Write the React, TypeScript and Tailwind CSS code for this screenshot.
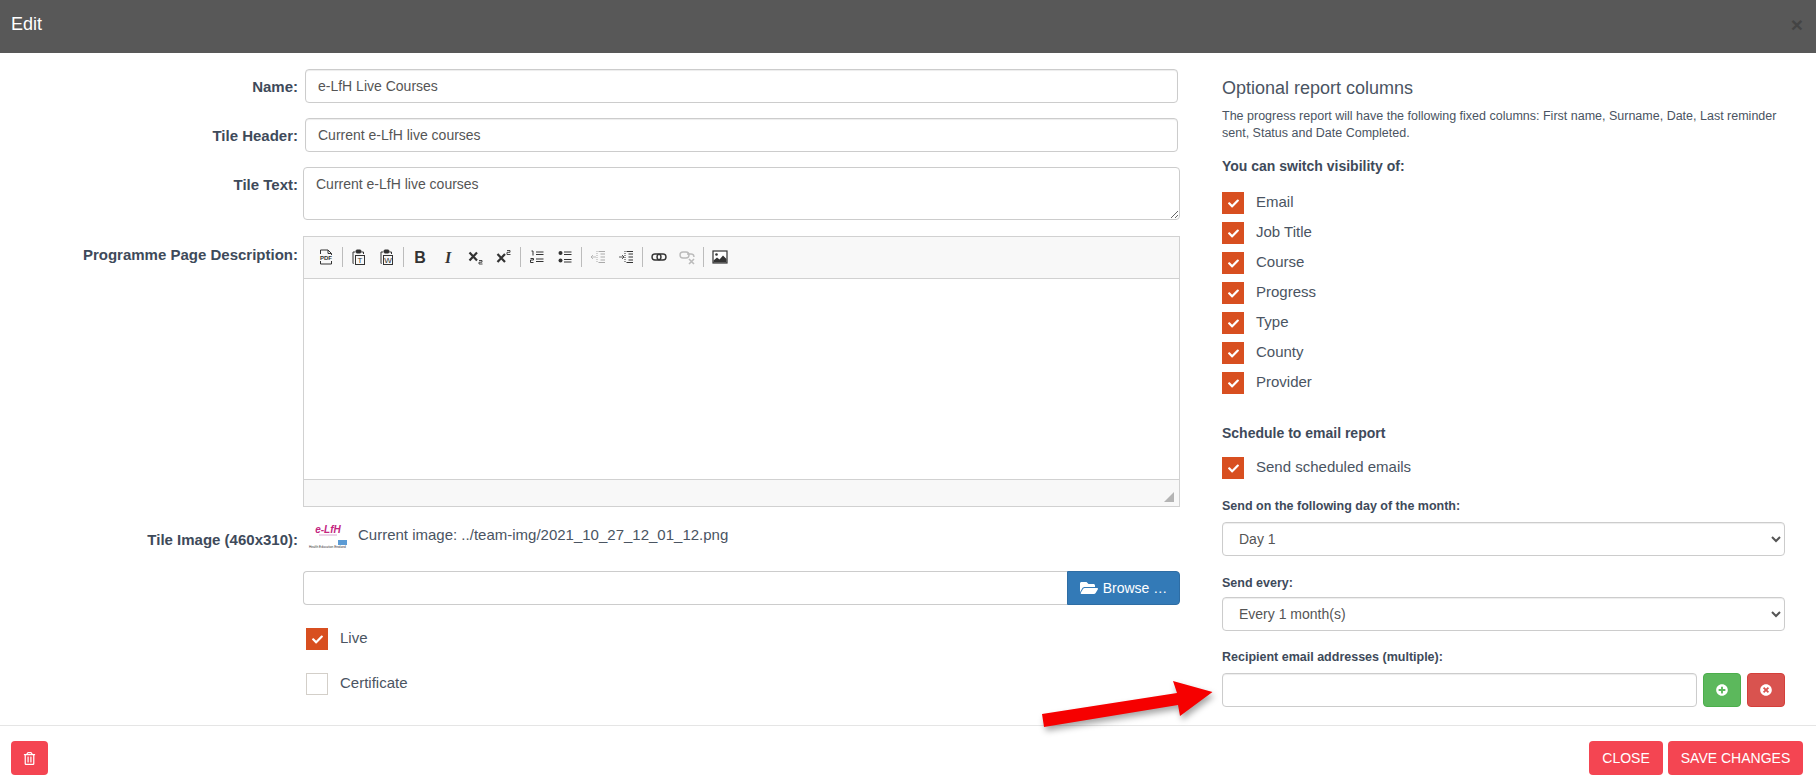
import { FaCheck, FaFolderOpen, FaPlusCircle, FaRegTrashAlt, FaTimesCircle } from 'react-icons/fa';
import type { ReactNode } from 'react';

const reportColumns = ['Email', 'Job Title', 'Course', 'Progress', 'Type', 'County', 'Provider'];

function Icon({ children }: { children: ReactNode }) {
  return (
    <svg width="16" height="16" viewBox="0 0 16 16" fill="none" stroke="#333" strokeWidth="1">
      {children}
    </svg>
  );
}

function Paste({ letter }: { letter: string }) {
  return (
    <Icon>
      <path d="M2.5 14.5 H2 V3 H4 M10.5 3 H12.5 V5" />
      <rect x="5" y="1" width="5" height="3" rx="1" fill="#333" />
      <rect x="4.5" y="6.5" width="9" height="9" />
      <text x="9" y="14" fontSize="8" textAnchor="middle" fill="#333" stroke="none" fontFamily="Liberation Sans">
        {letter}
      </text>
    </Icon>
  );
}

const toolbar: ReactNode[][] = [
  [
    <Icon key="pdf">
      <path d="M2.5 5 V1 H10 L13.5 4.5 V6 M10 1 V4.5 H13.5 M2.5 12 V15 H13.5 V12" />
      <text x="8" y="11" fontSize="6" fontWeight="700" textAnchor="middle" fill="#333" stroke="none" fontFamily="Liberation Sans">
        PDF
      </text>
    </Icon>,
  ],
  [<Paste key="t" letter="T" />, <Paste key="w" letter="W" />],
  [
    <Icon key="b">
      <text x="8" y="13.5" fontSize="16" fontWeight="700" textAnchor="middle" fill="#333" stroke="none" fontFamily="Liberation Sans">
        B
      </text>
    </Icon>,
    <Icon key="i">
      <text x="8" y="13.5" fontSize="16" fontWeight="700" fontStyle="italic" textAnchor="middle" fill="#333" stroke="none" fontFamily="Liberation Serif">
        I
      </text>
    </Icon>,
    <Icon key="sub">
      <path d="M1.5 3.5 L9 11.5 M9 3.5 L1.5 11.5" strokeWidth="2.2" />
      <path d="M11 11.5 H14 V13.2 H11 V15 H14.5" strokeWidth="0.9" />
    </Icon>,
    <Icon key="sup">
      <path d="M1.5 5 L9 13 M9 5 L1.5 13" strokeWidth="2.2" />
      <path d="M11 1.5 H14 V3.3 H11 V5.5 H14.5" strokeWidth="0.9" />
    </Icon>,
  ],
  [
    <Icon key="ol">
      <path d="M2.5 2 H4 V6.5 M7 3 H14.5 M7 5.5 H14.5 M1.5 9.5 H4.5 V11 H1.5 V13.5 H4.5 M7 10 H14.5 M7 12.5 H14.5" />
    </Icon>,
    <Icon key="ul">
      <circle cx="3.5" cy="4" r="2" fill="#333" stroke="none" />
      <circle cx="3.5" cy="11.5" r="2" fill="#333" stroke="none" />
      <path d="M7 3 H14.5 M7 5.5 H14.5 M7 10.5 H14.5 M7 13 H14.5" />
    </Icon>,
  ],
  [
    <Icon key="out">
      <g stroke="#aaa">
        <path d="M8.5 2.5 H15 M10.5 5 H15 M10.5 8 H15 M10.5 11 H15 M8.5 13.5 H15" />
        <path d="M1 8 H6 M3 6 L1 8 L3 10" strokeWidth="0.8" />
        <path d="M7 2 V14" strokeDasharray="1 1" />
      </g>
    </Icon>,
    <Icon key="in">
      <path d="M8.5 2.5 H15 M10.5 5 H15 M10.5 8 H15 M10.5 11 H15 M8.5 13.5 H15" />
      <path d="M1 8 H6 M4 6 L6 8 L4 10" strokeWidth="0.8" />
      <path d="M7 2 V14" strokeDasharray="1 1" />
    </Icon>,
  ],
  [
    <Icon key="link">
      <rect x="1" y="5" width="9" height="6" rx="3" strokeWidth="1.4" />
      <rect x="6" y="5" width="9" height="6" rx="3" strokeWidth="1.4" />
    </Icon>,
    <Icon key="unlink">
      <g stroke="#bbb">
        <rect x="1" y="3" width="9" height="6" rx="3" strokeWidth="1.4" />
        <path d="M8 5 H12 A3 3 0 0 1 15 8" strokeWidth="1.4" />
        <path d="M10 10 L15 15 M15 10 L10 15" strokeWidth="1.6" />
      </g>
    </Icon>,
  ],
  [
    <Icon key="img">
      <rect x="1" y="2" width="14" height="12" fill="#fff" strokeWidth="1.2" />
      <circle cx="4.5" cy="5.5" r="1.3" fill="#333" stroke="none" />
      <path d="M1.5 13.5 V11.5 L5 8.5 L7.5 10.5 L11 6.5 L14.5 10 V13.5 Z" fill="#333" stroke="none" />
    </Icon>,
  ],
];

function Toolbar() {
  return (
    <div className="flex h-[42px] items-center border-b border-[#d1d1d1] bg-[#f8f8f8] pb-[2px] pl-[8px]">
      {toolbar.map((group, i) => (
        <div key={i} className="flex items-center">
          {i > 0 && <span className="mx-[2px] h-[20px] w-px bg-[#bcbcbc]" />}
          {group.map((icon, j) => (
            <span key={j} className="flex h-[28px] w-[28px] items-center justify-center">
              {icon}
            </span>
          ))}
        </div>
      ))}
    </div>
  );
}

function Checkbox({ label, checked = true }: { label: string; checked?: boolean }) {
  return (
    <div className="flex h-[22px] items-center text-[15px] text-[#4a5462]">
      <span
        className={
          checked
            ? 'flex h-[22px] w-[22px] items-center justify-center bg-[#d84f20]'
            : 'h-[22px] w-[22px] border border-[#d3cfc9] bg-white'
        }
      >
        {checked && <FaCheck className="text-white" size={11} />}
      </span>
      <span className="ml-[12px] -translate-y-px">{label}</span>
    </div>
  );
}

function FormRow({ label, labelClass, children }: { label: string; labelClass: string; children: ReactNode }) {
  return (
    <div className="flex">
      <label className={`w-[298px] shrink-0 text-right text-[15px] leading-5 font-bold text-[#3e4a5a] ${labelClass}`}>{label}</label>
      {children}
    </div>
  );
}

const inputClass = 'block h-[34px] rounded border border-[#cccccc] bg-white px-3 text-sm text-[#555555] shadow-[inset_0_1px_1px_rgba(0,0,0,0.075)]';

function Logo() {
  return (
    <svg width="40" height="23" viewBox="0 0 40 23" className="shrink-0">
      <text x="20" y="8" textAnchor="middle" fontSize="10" fontWeight="700" fontStyle="italic" fill="#c4257f" fontFamily="Liberation Sans">
        e-LfH
      </text>
      <path d="M11 10 H29" stroke="#d9a9d0" strokeWidth="1" />
      <rect x="30" y="15" width="9" height="5" fill="#5b9bd5" />
      <text x="1" y="22.5" fontSize="3.2" fill="#333" fontFamily="Liberation Sans">
        Health Education England
      </text>
    </svg>
  );
}

function RedArrow() {
  return (
    <svg
      width="190"
      height="60"
      viewBox="1035 675 190 60"
      className="absolute left-[1035px] top-[675px] drop-shadow-[2px_4px_3px_rgba(0,0,0,0.35)]"
    >
      <path d="M1042 714 L1177 693 L1173 681 L1212.5 692 L1180 716 L1178 705 L1044 727 Z" fill="#f60000" />
    </svg>
  );
}

export default function App() {
  return (
    <div className="relative flex h-[784px] w-full flex-col overflow-hidden bg-white font-['Liberation_Sans',Arial,sans-serif]">
      <header className="flex h-[53px] shrink-0 items-center justify-between bg-[#585858] pl-[11px] pr-[13px] pb-[4px]">
        <h1 className="text-[18px] text-white">Edit</h1>
        <span className="text-[21px] leading-none font-bold text-[#444444]">×</span>
      </header>

      <div className="flex flex-1">
        {/* Left column */}
        <div className="w-[1180px] pt-4">
          <FormRow label="Name:" labelClass="pt-2">
            <input readOnly value="e-LfH Live Courses" className={`ml-[7px] w-[873px] ${inputClass}`} />
          </FormRow>
          <div className="mt-[15px]">
            <FormRow label="Tile Header:" labelClass="pt-2">
              <input readOnly value="Current e-LfH live courses" className={`ml-[7px] w-[873px] ${inputClass}`} />
            </FormRow>
          </div>
          <div className="mt-[15px]">
            <FormRow label="Tile Text:" labelClass="pt-2">
              <textarea
                readOnly
                value="Current e-LfH live courses"
                className="ml-[5px] block h-[53px] w-[877px] rounded border border-[#cccccc] bg-white px-3 py-[6px] text-sm text-[#555555]"
              />
            </FormRow>
          </div>
          <div className="mt-4">
            <FormRow label="Programme Page Description:" labelClass="pt-[9px]">
              <div className="ml-[5px] flex h-[271px] w-[877px] flex-col border border-[#d1d1d1]">
                <Toolbar />
                <div className="flex-1 bg-white" />
                <div className="flex h-[27px] items-end justify-end border-t border-[#d1d1d1] bg-[#f8f8f8] pb-[4px] pr-[5px]">
                  <svg width="10" height="10" viewBox="0 0 10 10">
                    <path d="M10 0 V10 H0 Z" fill="#b4b4b4" />
                  </svg>
                </div>
              </div>
            </FormRow>
          </div>
          <div className="mt-[18px]">
            <FormRow label="Tile Image (460x310):" labelClass="h-[23px] pt-[5px]">
              <div className="ml-[10px] flex h-[23px] items-start">
                <Logo />
                <span className="ml-[10px] text-[15px] leading-5 text-[#4a5462]">Current image: ../team-img/2021_10_27_12_01_12.png</span>
              </div>
            </FormRow>
          </div>
          <div className="ml-[303px] mt-[23px] flex h-[34px] w-[877px]">
            <div className="flex-1 rounded-l border border-r-0 border-[#cccccc] bg-white" />
            <button className="flex w-[113px] items-center justify-center gap-[5px] rounded-r border border-[#2e6da4] bg-[#337ab7] text-sm text-white">
              <FaFolderOpen size={18} />
              Browse …
            </button>
          </div>
          <div className="ml-[306px] mt-[23px] flex flex-col gap-[23px]">
            <Checkbox label="Live" />
            <Checkbox label="Certificate" checked={false} />
          </div>
        </div>

        {/* Right column */}
        <div className="ml-[42px] w-[563px] pt-[25px] text-[#3e4a5a]">
          <h2 className="text-[18px] leading-5 font-normal text-[#4a5462]">Optional report columns</h2>
          <p className="mt-[10px] text-[12.5px] leading-[17px] text-[#4a5462]">
            The progress report will have the following fixed columns: First name, Surname, Date, Last reminder sent, Status and Date Completed.
          </p>
          <div className="mt-[14px] text-sm leading-5 font-bold">You can switch visibility of:</div>
          <div className="mt-4 flex flex-col gap-2">
            {reportColumns.map((column) => (
              <Checkbox key={column} label={column} />
            ))}
          </div>
          <div className="mt-[29px] text-sm leading-5 font-bold">Schedule to email report</div>
          <div className="mt-[14px]">
            <Checkbox label="Send scheduled emails" />
          </div>
          <label className="mt-[19px] block text-[12.5px] leading-[17px] font-bold">Send on the following day of the month:</label>
          <select className={`mt-[7px] w-full ${inputClass}`} defaultValue="1">
            <option value="1">Day 1</option>
          </select>
          <label className="mt-[19px] block text-[12.5px] leading-[17px] font-bold">Send every:</label>
          <select className={`mt-[5px] w-full ${inputClass}`} defaultValue="1">
            <option value="1">Every 1 month(s)</option>
          </select>
          <label className="mt-[18px] block text-[12.5px] leading-[17px] font-bold">Recipient email addresses (multiple):</label>
          <div className="mt-[7px] flex">
            <input readOnly className={`w-[475px] ${inputClass}`} />
            <button className="ml-[6px] flex h-[34px] w-[38px] items-center justify-center rounded border border-[#4cae4c] bg-[#5cb85c] text-white">
              <FaPlusCircle size={12} />
            </button>
            <button className="ml-[6px] flex h-[34px] w-[38px] items-center justify-center rounded border border-[#d43f3a] bg-[#d9534f] text-white">
              <FaTimesCircle size={12} />
            </button>
          </div>
        </div>
      </div>

      <footer className="flex h-[59px] shrink-0 items-start justify-between border-t border-[#e5e5e5] pl-[11px] pr-[13px] pt-[15px]">
        <button className="flex h-[34px] w-[37px] items-center justify-center rounded bg-[#f44552] text-white">
          <FaRegTrashAlt size={13} />
        </button>
        <div className="flex gap-[5px]">
          <button className="h-[34px] w-[74px] rounded bg-[#f44552] text-sm text-white">CLOSE</button>
          <button className="h-[34px] w-[135px] rounded bg-[#f44552] text-sm text-white">SAVE CHANGES</button>
        </div>
      </footer>

      <RedArrow />
    </div>
  );
}
